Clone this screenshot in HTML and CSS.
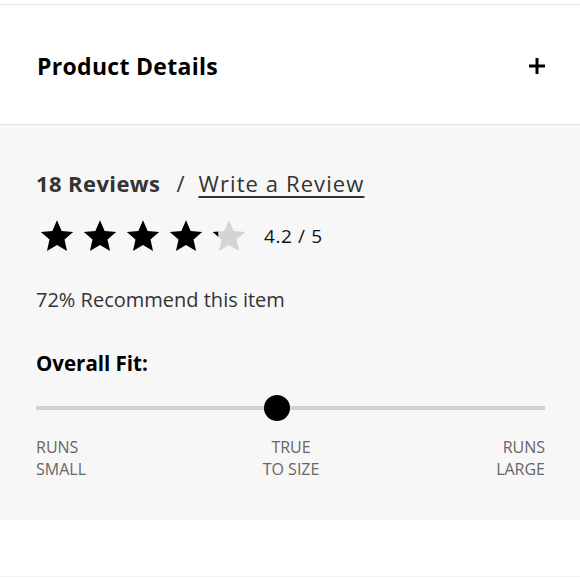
FILE: index.html
```html
<!DOCTYPE html>
<html>
<head>
<meta charset="utf-8">
<link rel="stylesheet" href="styles.css">
</head>
<body>
<div class="page">
  <div class="details">
    <h2 class="details-title">Product Details</h2>
    <svg class="plus" width="16" height="16" viewBox="0 0 16 16"><rect x="6.5" y="0" width="3" height="16" fill="#000"/><rect x="0" y="6.5" width="16" height="3" fill="#000"/></svg>
  </div>
  <div class="reviews">
    <div class="review-head">
      <span class="count">18 Reviews</span>
      <span class="slash">/</span>
      <a class="write" href="#">Write a Review</a>
    </div>
    <div class="rating">
      <div class="stars">
        <svg width="36" height="36" viewBox="0 0 24 24"><path d="M12 1.5l3.1 7.1 7.7.7-5.8 5.1 1.7 7.6L12 18l-6.7 4 1.7-7.6-5.8-5.1 7.7-.7z" fill="#000"/></svg>
        <svg width="36" height="36" viewBox="0 0 24 24"><path d="M12 1.5l3.1 7.1 7.7.7-5.8 5.1 1.7 7.6L12 18l-6.7 4 1.7-7.6-5.8-5.1 7.7-.7z" fill="#000"/></svg>
        <svg width="36" height="36" viewBox="0 0 24 24"><path d="M12 1.5l3.1 7.1 7.7.7-5.8 5.1 1.7 7.6L12 18l-6.7 4 1.7-7.6-5.8-5.1 7.7-.7z" fill="#000"/></svg>
        <svg width="36" height="36" viewBox="0 0 24 24"><path d="M12 1.5l3.1 7.1 7.7.7-5.8 5.1 1.7 7.6L12 18l-6.7 4 1.7-7.6-5.8-5.1 7.7-.7z" fill="#000"/></svg>
        <svg width="36" height="36" viewBox="0 0 24 24"><defs><clipPath id="part"><rect x="0" y="0" width="4.8" height="24"/></clipPath></defs><path d="M12 1.5l3.1 7.1 7.7.7-5.8 5.1 1.7 7.6L12 18l-6.7 4 1.7-7.6-5.8-5.1 7.7-.7z" fill="#d4d4d4"/><path d="M12 1.5l3.1 7.1 7.7.7-5.8 5.1 1.7 7.6L12 18l-6.7 4 1.7-7.6-5.8-5.1 7.7-.7z" fill="#000" clip-path="url(#part)"/></svg>
      </div>
      <span class="score">4.2 / 5</span>
    </div>
    <p class="recommend">72% Recommend this item</p>
    <h3 class="fit-title">Overall Fit:</h3>
    <div class="slider">
      <div class="track"></div>
      <div class="knob"></div>
    </div>
    <div class="fit-labels">
      <span class="lbl left">RUNS<br>SMALL</span>
      <span class="lbl center">TRUE<br>TO SIZE</span>
      <span class="lbl right">RUNS<br>LARGE</span>
    </div>
  </div>
  <div class="bottom"></div>
</div>
</body>
</html>
```

FILE: styles.css
```css
* { box-sizing: border-box; }
html, body { margin: 0; padding: 0; background: #fff; }
body { font-family: "Open Sans", "Lato", sans-serif; color: #000; }
.page { width: 580px; height: 580px; padding-top: 4px; }
.details {
  border-top: 1px solid #e3e3e3;
  border-bottom: 1px solid #e3e3e3;
  height: 121px;
  display: flex;
  align-items: center;
  justify-content: space-between;
  padding: 0 35px 0 37px;
}
.details-title { margin: 0; font-size: 23px; font-weight: 700; line-height: 30px; padding-top: 2px; letter-spacing: 0.3px; }
.plus { display: block; margin-top: 2px; }
.reviews {
  background: #f7f7f7;
  height: 395px;
  padding: 43px 35px 0 36px;
}
.review-head { display: flex; align-items: baseline; font-size: 22px; color: #333; line-height: 30px; }
.count { font-weight: 700; letter-spacing: 0.4px; }
.slash { margin: 0 14px 0 16px; }
.write { color: #333; text-decoration: underline; text-underline-offset: 4px; text-decoration-thickness: 2px; letter-spacing: 1.1px; }
.rating { display: flex; align-items: center; margin-top: 19px; height: 38px; }
.stars { display: flex; gap: 7px; margin-left: 3px; }
.stars svg { display: block; }
.score { font-size: 19px; margin-left: 17px; color: #111; letter-spacing: 0.6px; }
.recommend { margin: 32px 0 0; font-size: 20px; color: #333; line-height: 26px; }
.fit-title { margin: 36px 0 0; font-size: 20.5px; font-weight: 700; line-height: 28px; }
.slider { position: relative; height: 28px; margin-top: 17px; }
.track { position: absolute; left: 0; right: 0; top: 12px; height: 4px; background: #d1d1d1; }
.knob { position: absolute; left: 228px; top: 1px; width: 26px; height: 26px; border-radius: 50%; background: #000; }
.fit-labels { display: flex; justify-content: space-between; margin-top: 14px; font-size: 16px; line-height: 22px; color: #666; }
.lbl.left { text-align: left; }
.lbl.center { text-align: center; }
.lbl.right { text-align: right; }
.bottom { height: 57px; border-bottom: 1px solid #f0f0f0; }
```
